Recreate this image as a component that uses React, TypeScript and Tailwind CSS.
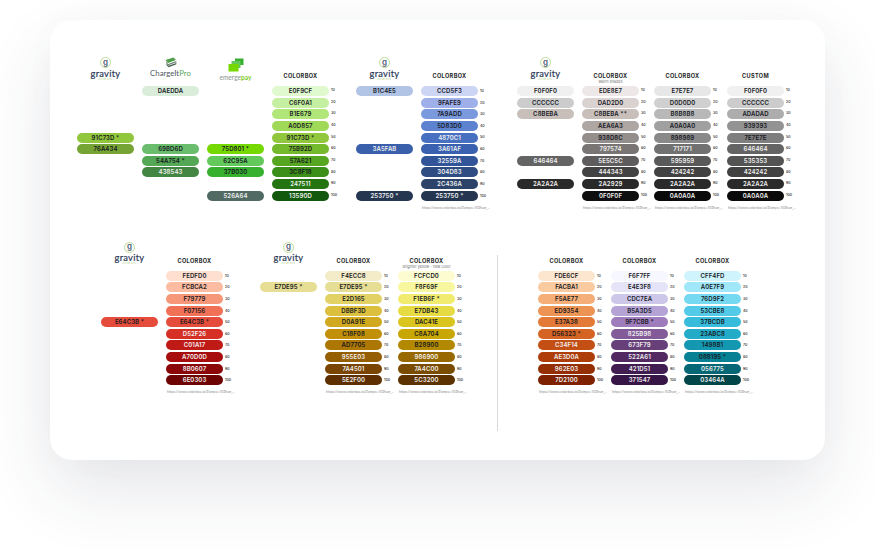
import React from "react";

type Col = {
  m: string;
  head?: React.ReactNode;
  rows: (string | null)[];
  labels?: boolean;
  drop?: boolean;
  note?: boolean;
};

const SCALE = [10, 20, 30, 40, 50, 60, 70, 80, 90, 100];
const DARK_TEXT = new Set(["1498B1", "3C8F18", "088195"]);

function textColor(hex: string) {
  if (DARK_TEXT.has(hex)) return "#16181f";
  const r = parseInt(hex.slice(0, 2), 16);
  const g = parseInt(hex.slice(2, 4), 16);
  const b = parseInt(hex.slice(4, 6), 16);
  return 0.299 * r + 0.587 * g + 0.114 * b >= 120 ? "#16181f" : "#f1f1f1";
}

function slots(map: Record<number, string>) {
  return Array.from({ length: 10 }, (_, i) => map[i] ?? null);
}

function Pill({ value }: { value: string }) {
  const hex = value.slice(0, 6);
  return (
    <div
      className="flex h-[10px] w-[57px] shrink-0 items-center justify-center rounded-full text-[6px] font-semibold leading-none tracking-[0.1px] whitespace-nowrap"
      style={{ backgroundColor: `#${hex}`, color: textColor(hex) }}
    >
      {value}
    </div>
  );
}

function Gravity() {
  return (
    <div className="flex w-[57px] flex-col items-center pt-[7px]">
      <div className="flex h-[11px] w-[11px] items-center justify-center rounded-full border border-[#bcdc94] pb-[2px] text-[8px] font-semibold leading-none text-[#4a5570]">
        g
      </div>
      <div className="mt-[0.5px] font-['Lato'] text-[9.4px] font-normal leading-[9px] tracking-[0.25px] text-[#2f3c59] [-webkit-text-stroke:0.2px_#2f3c59]">
        gravity
      </div>
      <div className="text-[1.6px] leading-[2px] tracking-[0.6px] text-[#8dbb4e]">PAYMENTS</div>
    </div>
  );
}

function Title({ text, sub }: { text: string; sub?: string }) {
  return (
    <div className="flex w-[57px] flex-col items-center pt-[22px]">
      <div className="text-[5.6px] font-bold leading-[8px] tracking-[0.35px] text-[#1d1f26]">{text}</div>
      {sub && <div className="whitespace-nowrap text-[3.8px] leading-[4px] text-[#777]">{sub}</div>}
    </div>
  );
}

function ChargeIt() {
  return (
    <div className="flex w-[57px] flex-col items-center pt-[7px]">
      <svg width="12" height="11" viewBox="0 0 12 11">
        <path d="M0.5 3 L8.5 0.5 L11 3 L3 6 Z" fill="#4f9e4b" />
        <path d="M1 4.6 L3.2 7 L11.4 4 L11.4 5.2 L3.2 8.2 L1 5.8 Z" fill="#6b7f6e" />
        <path d="M1.5 6.4 L3.6 8.8 L11.4 6 L11.4 7.2 L3.6 10.2 L1.5 8 Z" fill="#3f5a44" />
      </svg>
      <div className="mt-[1px] whitespace-nowrap font-['Lato'] text-[7.8px] leading-[9px] text-[#4f5a64]">
        ChargeIt<span className="text-[#5aa95a]">Pro</span>
      </div>
    </div>
  );
}

function EmergePay() {
  return (
    <div className="flex w-[57px] flex-col items-center pt-[8px]">
      <svg width="16" height="14" viewBox="0 0 16 14">
        <rect x="7" y="0.5" width="8.5" height="6.5" fill="#37b030" />
        <rect x="3.5" y="3" width="9" height="7" fill="#62c95a" />
        <rect x="0.5" y="6" width="10" height="7.5" fill="#75d801" />
      </svg>
      <div className="mt-[0.5px] whitespace-nowrap font-['Lato'] text-[6.6px] leading-[8px] text-[#8a9690]">
        emerge<span className="font-bold text-[#7ccb1c]">pay</span>
      </div>
    </div>
  );
}

function Column({ col }: { col: Col }) {
  return (
    <div className={`flex shrink-0 flex-col ${col.m}`}>
      <div className="h-[36px]">{col.head}</div>
      <div className="flex flex-col gap-[1.63px]">
        {col.rows.map((r, i) => (
          <div key={i} className="flex h-[10px] items-center">
            {r ? <Pill value={r} /> : <div className="h-[10px] w-[57px]" />}
            {col.labels && (
              <div className={`w-[15px] pl-[2px] text-[3.6px] font-medium leading-none text-[#222] ${col.drop ? "pt-[1.5px]" : ""}`}>
                {SCALE[i]}
              </div>
            )}
          </div>
        ))}
      </div>
      {col.note && (
        <div className="mt-[5px] whitespace-nowrap pl-[1px] text-[3.4px] leading-[4px] text-[#888]">
          https://www.colorbox.io/#steps=10#hue_..
        </div>
      )}
    </div>
  );
}

const colorbox = <Title text="COLORBOX" />;
const gravity = <Gravity />;

const top: Col[] = [
  { m: "", head: gravity, rows: slots({ 4: "91C73D *", 5: "76A434" }) },
  { m: "ml-[8px]", head: <ChargeIt />, rows: slots({ 0: "DAEDDA", 5: "69BD6D", 6: "54A754 *", 7: "438543" }) },
  { m: "ml-[8px]", head: <EmergePay />, rows: slots({ 5: "75D801 *", 6: "62C95A", 7: "37B030", 9: "526A64" }) },
  {
    m: "ml-[8px]",
    head: colorbox,
    labels: true,
    rows: ["E0F9CF", "C6F0A1", "B1E679", "A0D857", "91C73D *", "75B92D", "57A621", "3C8F18", "247511", "13590D"],
  },
  { m: "ml-[12px]", head: gravity, rows: slots({ 0: "B1C4E5", 5: "3A5FAB", 9: "253750 *" }) },
  {
    m: "ml-[8px]",
    head: colorbox,
    labels: true,
    drop: true,
    note: true,
    rows: ["CCD5F3", "9FAFE9", "7A9ADD", "5D83D0", "4870C1", "3A61AF", "32559A", "304D83", "2C436A", "253750 *"],
  },
  { m: "ml-[24px]", head: gravity, rows: slots({ 0: "F0F0F0", 1: "CCCCCC", 2: "C8BEBA", 6: "646464", 8: "2A2A2A" }) },
  {
    m: "ml-[8px]",
    head: <Title text="COLORBOX" sub="warm shades" />,
    labels: true,
    note: true,
    rows: ["EDE8E7", "DAD2D0", "C8BEBA **", "AEA6A3", "938D8C", "797574", "5E5C5C", "444343", "2A2929", "0F0F0F"],
  },
  {
    m: "",
    head: colorbox,
    labels: true,
    note: true,
    rows: ["E7E7E7", "D0D0D0", "B8B8B8", "A0A0A0", "898989", "717171", "595959", "424242", "2A2A2A", "0A0A0A"],
  },
  {
    m: "ml-[1px]",
    head: <Title text="CUSTOM" />,
    labels: true,
    note: true,
    rows: ["F0F0F0", "CCCCCC", "ADADAD", "939393", "7E7E7E", "646464", "535353", "424242", "2A2A2A", "0A0A0A"],
  },
];

const bottomLeft: Col[] = [
  { m: "", head: gravity, rows: slots({ 4: "E64C3B *" }) },
  {
    m: "ml-[8px]",
    head: colorbox,
    labels: true,
    drop: true,
    note: true,
    rows: ["FEDFD0", "FCBCA2", "F79779", "F07156", "E64C3B *", "D52F26", "C01A17", "A70D0D", "8B0607", "6E0303"],
  },
  { m: "ml-[22px]", head: gravity, rows: slots({ 1: "E7DE95 *" }) },
  {
    m: "ml-[8px]",
    head: colorbox,
    labels: true,
    drop: true,
    note: true,
    rows: ["F4ECC8", "E7DE95 *", "E2D165", "DBBF3D", "D0A91E", "C18F08", "AD7705", "955E03", "7A4501", "5E2F00"],
  },
  {
    m: "ml-[1px]",
    head: <Title text="COLORBOX" sub="brighter yellow - new color" />,
    labels: true,
    drop: true,
    note: true,
    rows: ["FCFCD0", "F8F69F", "F1EB6F *", "E7DB43", "DAC41E", "C8A704", "B28900", "986900", "7A4C00", "5C3200"],
  },
];

const bottomRight: Col[] = [
  {
    m: "ml-[40px]",
    head: colorbox,
    labels: true,
    drop: true,
    note: true,
    rows: ["FDE6CF", "FACBA1", "F5AE77", "ED9354", "E37A38", "D56323 *", "C34F14", "AE3D0A", "962E03", "7D2100"],
  },
  {
    m: "ml-[1px]",
    head: colorbox,
    labels: true,
    drop: true,
    note: true,
    rows: ["F6F7FF", "E4E3F8", "CDC7EA", "B5A3D5", "9F7CBB *", "825B98", "673F79", "522A61", "421D51", "371547"],
  },
  {
    m: "ml-[1px]",
    head: colorbox,
    labels: true,
    drop: true,
    note: true,
    rows: ["CFF4FD", "A0E7F9", "76D9F2", "53CBE8", "37BCDB", "23ABC8", "1498B1", "088195 *", "056775", "03464A"],
  },
];

export default function App() {
  return (
    <div className="h-[550px] w-[875px] overflow-hidden bg-white pl-[50px] pt-[20px] font-['Inter',sans-serif]">
      <div className="h-[440px] w-[775px] rounded-[22px] bg-white pt-[30px] shadow-[0_30px_70px_rgba(40,50,70,0.12),0_0_40px_rgba(40,50,70,0.02)]">
        <div className="flex h-[184.7px] items-start pl-[27px]">
          {top.map((c, i) => (
            <Column key={i} col={c} />
          ))}
        </div>
        <div className="flex items-start pl-[51px]">
          {bottomLeft.map((c, i) => (
            <Column key={i} col={c} />
          ))}
          <div className="ml-[27px] mt-[20px] h-[176px] w-px shrink-0 bg-[#d9d9d9]" />
          {bottomRight.map((c, i) => (
            <Column key={i} col={c} />
          ))}
        </div>
      </div>
    </div>
  );
}
